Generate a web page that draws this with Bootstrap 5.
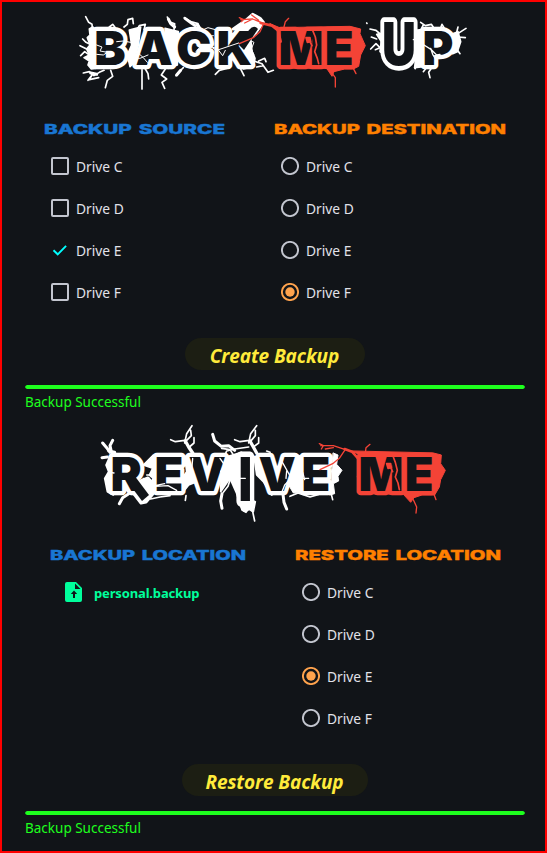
<!DOCTYPE html>
<html lang="en">
<head>
<meta charset="utf-8">
<title>Back Me Up</title>
<link href="https://cdn.jsdelivr.net/npm/bootstrap@5.3.0/dist/css/bootstrap.min.css" rel="stylesheet">
<style>
body{background:#111418;border:2px solid #f00;height:853px;overflow:hidden;font-family:"Noto Sans",sans-serif;font-size:14px;color:#e2e2e9}
.panel{height:426px}
.logo{height:110px;overflow:visible;flex:none}
.logo text{font-family:Inter,sans-serif;font-weight:900;font-size:47px;fill:#111418;stroke-width:8.5px;stroke-linejoin:round;paint-order:stroke}
.wh{stroke:#fff}.rd{stroke:#f44336}
.crack{fill:none;stroke-linecap:round;stroke-linejoin:round}
.whf{fill:#fff}.rdf{fill:#f44336}
.cols{height:226px}
.src{padding-left:42px;width:272px}
.src2{padding-left:48px;width:293px}
.head{height:33px;overflow:visible;display:block}
.head text{font-family:Inter,sans-serif;font-weight:800;font-size:13.8px;word-spacing:1.6px}
.blue{fill:#1976d2;stroke:#1976d2;stroke-width:.4px}.orange{fill:#ff8000;stroke:#ff8000;stroke-width:.4px}
.opt{height:42px;padding-left:7px;gap:7px}
.opt svg{flex:none;margin-top:-1px}
.opt span{font-size:13.8px;margin-top:3px}
.file{height:42px;padding-left:12px;gap:8px;color:#00ff9c}
.file span{font-weight:700;font-size:13px;letter-spacing:-.15px;margin-top:3px}
.go,.go:hover{height:32px;border-radius:16px;background:#1c1e13;color:#ffeb3b;font-weight:700;font-style:italic;font-size:19px;padding:0;border:0;margin-left:2px;line-height:36px;font-family:"Open Sans",sans-serif;letter-spacing:-.1px}
.bar{height:4px;margin:15px 20px 0 23px;border-radius:2px;background:transparent}
.bar .progress-bar{background:#1eff1e;border-radius:2px}
.state{color:#1eff1e;margin:3px 0 0 23px;line-height:20px;font-size:13.5px}
</style>
</head>
<body>
<svg class="d-none"><defs>
<g id="off"><circle cx="12" cy="12" r="8.1" fill="none" stroke="#c3c6cf" stroke-width="1.9"/></g>
<g id="on"><circle cx="12" cy="12" r="8.1" fill="none" stroke="#ffa34d" stroke-width="1.9"/><circle cx="12" cy="12" r="4.7" fill="#ffa34d"/></g>
<g id="box"><rect x="4" y="4" width="16" height="16" rx="1" fill="none" stroke="#c3c6cf" stroke-width="2"/></g>
<g id="tick"><path d="M5.5 12.2l4.2 4.1 8.4-8.4" fill="none" stroke="#0ff" stroke-width="1.9"/></g>
</defs></svg>
<section class="panel d-flex flex-column">
<svg class="logo w-100" viewBox="2 2 543 110">
 <g transform="translate(70 5) scale(.33333)" class="crack wh" stroke-width="5">
  <path class="whf" d="M58 72L68 66L82 78L78 190L64 192L54 180L58 168L42 158L58 150L50 132L60 120L52 98L60 90Z M178 75L212 66L205 120L190 175L180 185L172 150L185 120Z M285 70L325 80L322 180L295 190Z M538 120L555 160L550 185L520 192Z"/>
  <path d="M47 35L56 52L66 58L68 78M30 122L50 132M38 102L48 112L60 118M32 152L44 140L58 150M118 66L128 58L136 68M162 66L172 58L174 44L188 40L190 56M196 84L208 62L226 58L222 74M292 36L298 50L314 56L312 74M343 38L362 50L384 56L392 76M40 204L58 200L72 212L88 202L102 196M54 226L66 210L58 224L86 218M106 248L112 226L128 214L122 196M216 252L216 194M236 222L234 206L226 192M284 250L276 232L290 222L274 210L286 192M318 212L330 198L340 188M436 208L448 196L470 190M522 212L516 200L510 188M552 168L576 176L594 202L610 196M560 186L580 182M566 168L584 160L588 170" />
  <path stroke-width="9" d="M295 42L302 56L314 66M345 40L364 54L376 62M382 60L396 78M62 204L80 208M320 210L332 196"/>
  <path class="whf" stroke-width="9" d="M490 72L530 44L548 28L570 40L580 52L556 84L540 100L545 150L510 110L520 72Z"/>
  <path stroke-width="3" d="M392 74L410 94L430 92M396 76L414 68L436 74M394 120L420 124L444 132M534 104L552 112L544 132L552 150"/>
 </g>
 <g transform="translate(270 5) scale(.33333)" class="crack wh" stroke-width="5">
  <path class="whf" d="M320 88L340 84L344 150L330 140L334 110Z M436 76L470 72L466 184L434 188L440 130Z M548 86L564 80L572 110L562 140L548 146Z"/>
  <path d="M300 72L318 76L334 90M304 96L320 102M302 132L318 116L330 128L316 134M290 54L291 55M452 52L466 62L484 58L492 70M510 74L516 58L522 68L516 78M560 82L564 66M560 88L588 70M562 96L586 98M560 132L570 146M484 190L476 202L480 218M460 200L468 190M434 188L436 191M434 110L460 60"/>
 </g>
 <text class="wh" y="65.2" x="94.2 135.5 176.3 216.5">BACK</text>
 <path fill="#111418" d="M239 45L249 30Q254 24 258 29L244 50Z"/>
 <g transform="translate(270 5) scale(.33333)" class="crack rd" stroke-width="6">
  <path class="rdf" stroke-width="3" d="M0 56L20 68L28 90L24 184L34 190L170 190L186 214L192 200L224 192L250 192L266 184L272 150L286 122L270 86L272 72L240 64L30 68Z"/>
  <path stroke-width="4" d="M42 66L46 50L56 40M180 196L196 218L196 246M250 190L258 206"/>
 </g>
 <text class="rd" y="65.2" x="278.6 324.8">ME</text>
 <text class="wh" x="382" y="65.2" transform="translate(0 -16.6) scale(1 1.255)" style="stroke-width:7.6px">U</text>
 <text class="wh" x="422.5" y="65.2">P</text>
 <g transform="translate(70 5) scale(.33333)" class="crack wh" stroke-width="3">
  <path d="M80 120L96 126L90 138L112 142L100 150L80 148M140 110L160 108L192 114M186 158L210 160L234 150M200 140L220 158L232 172M378 140L392 124L420 124L440 136L506 114M446 136L458 152L466 136"/>
 </g>
 <g transform="translate(270 5) scale(.33333)" class="crack">
  <path class="wh" stroke-width="4" d="M462 120L484 134L500 150L510 148M430 104L444 100M482 130L488 148L502 170"/>
  <path class="rd rdf" stroke-width="5" d="M108 98L120 98L122 110L112 112Z"/>
  <path class="rd" stroke-width="5" d="M128 76L136 96L140 120L134 140L142 160L146 176M116 104L126 122"/>
 </g>
 <g transform="translate(70 5) scale(.33333)" class="crack rd">
  <path stroke-width="8" d="M572 54L606 62L624 76L632 110"/>
  <path stroke-width="4" d="M508 38L520 44L514 50M512 44L548 42L582 56M524 54L548 42M580 58L570 80L550 98L508 116M545 30L566 46"/>
 </g>
</svg>
<div class="cols d-flex">
 <div class="src flex-shrink-0">
  <svg class="head w-100" role="heading"><text class="blue" x="0" y="22" textLength="181" lengthAdjust="spacingAndGlyphs">BACKUP SOURCE</text></svg>
  <div class="opt d-flex align-items-center"><svg width="18" height="18" viewBox="3 3 18 18"><use href="#box"/></svg><span>Drive C</span></div>
  <div class="opt d-flex align-items-center"><svg width="18" height="18" viewBox="3 3 18 18"><use href="#box"/></svg><span>Drive D</span></div>
  <div class="opt d-flex align-items-center"><svg width="18" height="18" viewBox="3 3 18 18"><use href="#tick"/></svg><span>Drive E</span></div>
  <div class="opt d-flex align-items-center"><svg width="18" height="18" viewBox="3 3 18 18"><use href="#box"/></svg><span>Drive F</span></div>
 </div>
 <div class="flex-grow-1">
  <svg class="head w-100" role="heading"><text class="orange" x="0" y="22" textLength="232" lengthAdjust="spacingAndGlyphs">BACKUP DESTINATION</text></svg>
  <div class="opt d-flex align-items-center"><svg width="18" height="18" viewBox="3 3 18 18"><use href="#off"/></svg><span>Drive C</span></div>
  <div class="opt d-flex align-items-center"><svg width="18" height="18" viewBox="3 3 18 18"><use href="#off"/></svg><span>Drive D</span></div>
  <div class="opt d-flex align-items-center"><svg width="18" height="18" viewBox="3 3 18 18"><use href="#off"/></svg><span>Drive E</span></div>
  <div class="opt d-flex align-items-center"><svg width="18" height="18" viewBox="3 3 18 18"><use href="#on"/></svg><span>Drive F</span></div>
 </div>
</div>
<button class="go btn align-self-center" style="width:180px">Create Backup</button>
<div class="progress bar"><div class="progress-bar" style="width:100%"></div></div>
<div class="state">Backup Successful</div>
</section>
<section class="panel d-flex flex-column">
<svg class="logo w-100" viewBox="2 428 543 110">
 <g class="crack wh" stroke-width="5" transform="translate(90 415) scale(.33333)">
  <path class="whf" d="M72 112L58 128L48 150L56 170L44 190L52 230L70 240L78 180Z M160 150L190 120L204 130L200 200L182 232L170 225L190 190L178 180L188 160Z M284 124L310 120L332 180L350 236L330 230L320 200L296 210L280 230L270 200L290 170Z M395 130L455 112L455 240L440 235L420 190L392 230Z M440 236L496 260L490 290L478 278L468 292L456 285Z M492 124L520 130L560 230L545 240L520 200L500 180Z"/>
  <path stroke-width="9" d="M38 84L50 98L60 112M68 76L60 92L64 110M36 128L52 126M56 108L74 112M88 266L98 248L114 238M396 280L392 258L396 236M368 58L374 78L394 94L416 92L434 106"/>
  <path d="M242 74L256 80L284 76M284 84L290 56L306 32M290 76L304 62L302 46M298 96L312 84L312 68"/>
  <path d="M434 74L450 80L478 76M476 84L482 56L500 32M484 76L496 62L496 46M490 96L506 84L506 68"/>
  <path stroke-width="10" d="M286 78L296 96L308 114M480 78L490 96L500 114"/>
  <path d="M286 256L288 242M404 122L410 108L434 102L476 96M450 270L462 288L476 284M486 260L474 280L488 290L494 318M530 108L540 112M400 232L414 214L426 178M395 100L420 104L438 132M182 252L210 246L240 242"/>
 </g>
 <g class="crack wh" transform="translate(270 415) scale(.33333)">
  <path class="whf" stroke-width="3" d="M80 118L100 126L98 232L70 234L50 200L68 170Z M190 114L204 120L200 148L216 166L204 184L206 198L190 206L194 236L180 240Z"/>
  <path stroke-width="9" d="M38 230L42 262L50 282"/>
  <path stroke-width="5" d="M60 244L84 234L120 246L146 238M184 238L188 254"/>
 </g>
 <path class="wh whf" stroke-width="3" stroke-linejoin="round" d="M128 486L141 503L146 502L157 489L148 478Z"/>
 <text class="wh" y="491" x="110.5 154.4">RE</text>
 <path fill="#111418" d="M124 477L134 475L149 495L142 501Z"/>
 <text class="wh" y="491" x="188.5">V</text>
 <text class="wh" y="491" x="238.5" transform="translate(0 -133.5) scale(1 1.292)">I</text>
 <text class="wh" y="491" x="258.5">V</text>
 <text class="wh" y="491" x="301.5">E</text>
 <g class="crack wh" transform="translate(90 415) scale(.33333)">
  <path stroke-width="4" d="M60 172L72 174M160 190L184 214L224 206M184 196L196 214L234 212L260 226M170 180L184 180M390 130L404 150L392 170L406 196M404 160L428 160M440 190L466 190M308 130L304 180L318 210M500 160L520 190"/>
 </g>
 <g class="crack wh" transform="translate(270 415) scale(.33333)"><path stroke-width="4" d="M36 140L52 168L64 190L116 190M50 168L48 190M64 190L44 210L36 230M66 190L90 206M98 172L104 194"/></g>
 <g class="crack rd" transform="translate(270 415) scale(.33333)">
  <path class="rdf" stroke-width="3" d="M240 108L264 116L270 140L262 184L268 236L400 238L422 262L432 248L456 240L494 240L508 216L512 194L526 166L512 146L514 120L490 114Z"/>
  <path stroke-width="8" d="M224 102L246 110L264 130"/>
  <path stroke-width="4" d="M148 86L160 92L154 102M152 92L190 92L226 104M166 102L190 98M224 106L208 130L188 146L150 164M286 114L288 98L300 88M430 254L440 276L438 294M492 238L498 254"/>
 </g>
 <text class="rd" y="491" x="358.6 404.8">ME</text>
 <g class="crack rd" transform="translate(270 415) scale(.33333)"><path class="rdf" stroke-width="5" d="M350 146L362 146L364 158L354 160Z"/><path stroke-width="5" d="M370 126L376 142L382 166L376 186L384 204L388 224M358 150L368 170"/></g>
</svg>
<div class="cols d-flex">
 <div class="src2 flex-shrink-0">
  <svg class="head w-100" role="heading"><text class="blue" x="0" y="22" textLength="196" lengthAdjust="spacingAndGlyphs">BACKUP LOCATION</text></svg>
  <div class="file d-flex align-items-center"><svg width="24" height="24" viewBox="0 0 24 24"><path fill="#00ff9c" fill-rule="evenodd" d="M5 2h9l6 6v12a2 2 0 0 1-2 2H5a2 2 0 0 1-2-2V4a2 2 0 0 1 2-2zM13 3.5V9h5.5zM11 18v-4H8.8l3.2-3.4 3.2 3.4H13v4z"/></svg><span>personal.backup</span></div>
 </div>
 <div class="flex-grow-1">
  <svg class="head w-100" role="heading"><text class="orange" x="0" y="22" textLength="206" lengthAdjust="spacingAndGlyphs">RESTORE LOCATION</text></svg>
  <div class="opt d-flex align-items-center"><svg width="18" height="18" viewBox="3 3 18 18"><use href="#off"/></svg><span>Drive C</span></div>
  <div class="opt d-flex align-items-center"><svg width="18" height="18" viewBox="3 3 18 18"><use href="#off"/></svg><span>Drive D</span></div>
  <div class="opt d-flex align-items-center"><svg width="18" height="18" viewBox="3 3 18 18"><use href="#on"/></svg><span>Drive E</span></div>
  <div class="opt d-flex align-items-center"><svg width="18" height="18" viewBox="3 3 18 18"><use href="#off"/></svg><span>Drive F</span></div>
 </div>
</div>
<button class="go btn align-self-center" style="width:186px">Restore Backup</button>
<div class="progress bar"><div class="progress-bar" style="width:100%"></div></div>
<div class="state">Backup Successful</div>
</section>
<script src="https://cdn.jsdelivr.net/npm/bootstrap@5.3.0/dist/js/bootstrap.bundle.min.js"></script>
</body>
</html>
